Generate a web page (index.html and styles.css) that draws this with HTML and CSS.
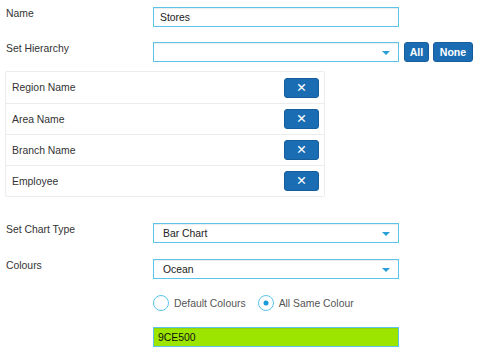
FILE: index.html
```html
<!DOCTYPE html>
<html>
<head>
<meta charset="utf-8">
<link rel="stylesheet" href="styles.css">
</head>
<body>
<div class="form">
  <div class="row row-name">
    <div class="label">Name</div>
    <div class="control"><div class="input">Stores</div></div>
  </div>
  <div class="row row-hier">
    <div class="label">Set Hierarchy</div>
    <div class="control">
      <div class="select"><span></span><i class="arrow"></i></div>
      <button class="btn btn-all">All</button>
      <button class="btn btn-none">None</button>
    </div>
  </div>
  <div class="list">
    <div class="item"><span>Region Name</span><button class="xbtn">&#x2715;</button></div>
    <div class="item"><span>Area Name</span><button class="xbtn">&#x2715;</button></div>
    <div class="item"><span>Branch Name</span><button class="xbtn">&#x2715;</button></div>
    <div class="item"><span>Employee</span><button class="xbtn">&#x2715;</button></div>
  </div>
  <div class="row row-chart">
    <div class="label">Set Chart Type</div>
    <div class="control"><div class="select"><span>Bar Chart</span><i class="arrow"></i></div></div>
  </div>
  <div class="row row-colours">
    <div class="label">Colours</div>
    <div class="control"><div class="select"><span>Ocean</span><i class="arrow"></i></div></div>
  </div>
  <div class="row row-radio">
    <div class="label"></div>
    <div class="control radios">
      <label class="radio"><span class="circle"></span>Default Colours</label>
      <label class="radio"><span class="circle checked"></span>All Same Colour</label>
    </div>
  </div>
  <div class="row row-color">
    <div class="label"></div>
    <div class="control"><div class="input green">9CE500</div></div>
  </div>
</div>
</body>
</html>
```
FILE: styles.css
```css
html, body {
  margin: 0;
  padding: 0;
  background: #fff;
}
body {
  font-family: "Liberation Sans", Arial, Helvetica, sans-serif;
  font-size: 10.4px;
  color: #333;
  width: 477px;
  height: 354px;
  overflow: hidden;
}
.form {
  padding: 7px 0 0 0;
  display: flex;
  flex-direction: column;
}
.row {
  display: flex;
  align-items: flex-start;
}
.label {
  width: 147px;
  padding-left: 6px;
  padding-top: 0;
  flex: none;
  line-height: 14px;
}
.control {
  display: flex;
  align-items: center;
}
.input, .select {
  box-sizing: border-box;
  width: 246px;
  height: 20px;
  border: 1.5px solid #5cc4ea;
  box-shadow: inset 0 1px 1px rgba(0,0,0,0.08);
  background: #fff;
  display: flex;
  align-items: center;
  color: #222;
}
.input {
  padding: 0 6px;
}
.select {
  justify-content: space-between;
  padding-left: 9px;
  padding-right: 8px;
}
.arrow {
  width: 0;
  height: 0;
  border-left: 4px solid transparent;
  border-right: 4px solid transparent;
  border-top: 4px solid #2a9fd6;
  margin-top: 1px;
}
.btn {
  box-sizing: border-box;
  height: 20px;
  padding: 0;
  background: #1b6db3;
  border: 1px solid #155d9c;
  border-radius: 3px;
  color: #fff;
  font-family: inherit;
  font-size: 10.6px;
  font-weight: bold;
}
.btn-all {
  width: 25px;
  margin-left: 5px;
}
.btn-none {
  width: 40px;
  margin-left: 4px;
}
.row-hier {
  margin-top: 15px;
}
.list {
  margin: 9px 0 0 5px;
  width: 320px;
  box-sizing: border-box;
  border: 1px solid #ececec;
  border-radius: 2px;
}
.item {
  height: 31px;
  box-sizing: border-box;
  display: flex;
  align-items: center;
  justify-content: space-between;
  padding: 0 5px 0 6px;
  border-top: 1px solid #ececec;
}
.item:first-child {
  border-top: none;
}
.xbtn {
  width: 35px;
  height: 20px;
  box-sizing: border-box;
  background: #1b6db3;
  border: 1px solid #155d9c;
  border-radius: 3px;
  color: #fff;
  font-family: "DejaVu Sans", sans-serif;
  font-weight: bold;
  font-size: 12.5px;
  padding: 0;
  line-height: 18px;
}
.row-chart {
  margin-top: 26px;
}
.row-colours {
  margin-top: 16px;
}
.row-radio {
  margin-top: 16px;
}
.radios {
  height: 16px;
}
.radio {
  display: flex;
  align-items: center;
  color: #555;
  margin-right: 12px;
}
.circle {
  box-sizing: border-box;
  width: 16px;
  height: 16px;
  border: 1.5px solid #5cc4ea;
  border-radius: 50%;
  margin-right: 5px;
  position: relative;
  background: #fff;
}
.circle.checked::after {
  content: "";
  position: absolute;
  width: 5px;
  height: 5px;
  border-radius: 50%;
  background: #1a9ad6;
  left: 50%;
  top: 50%;
  transform: translate(-50%, -50%);
}
.row-color {
  margin-top: 16px;
}
.green {
  background: #9ce500;
  color: #111;
  padding-left: 4px;
}
```
